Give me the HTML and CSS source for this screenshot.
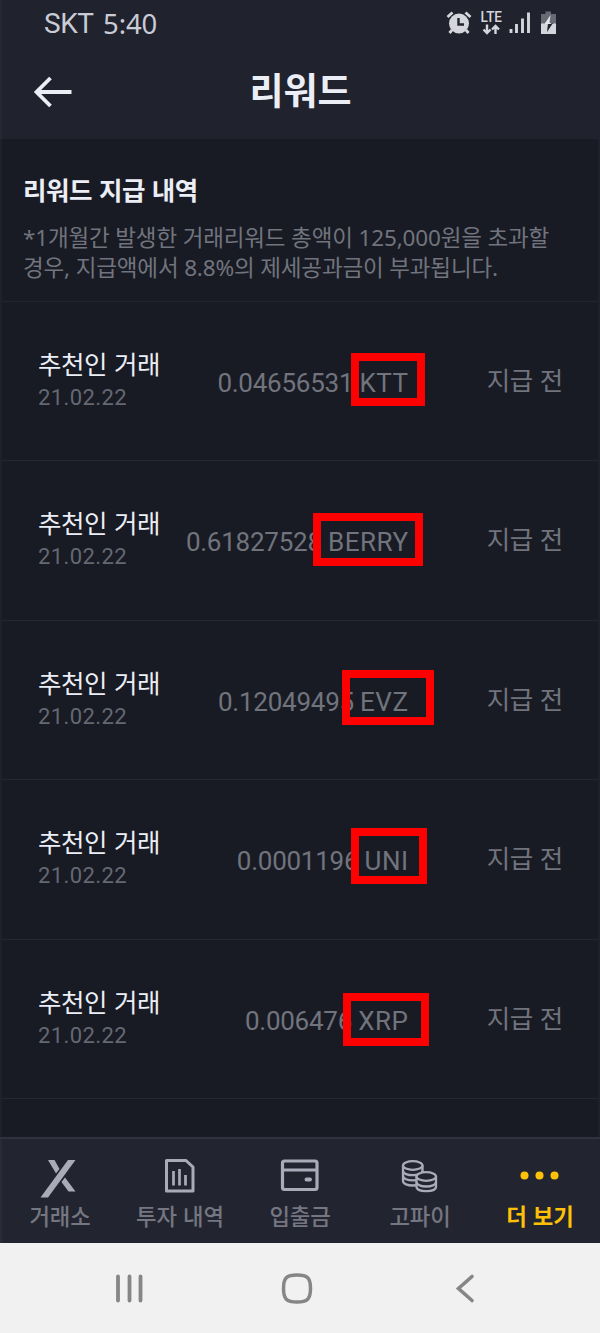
FILE: index.html
```html
<!DOCTYPE html>
<html lang="ko">
<head>
    <meta charset="UTF-8">
    <meta name="viewport" content="width=device-width, initial-scale=1.0">
    <title>리워드</title>
    <link rel="stylesheet" href="styles.css">
</head>
<body>
    <div class="app">
        <header class="top">
            <div class="status-bar">
                <span class="carrier">SKT</span><span class="clock">5:40</span>
                <svg class="status-icons" width="112" height="34" viewBox="0 -4 112 34">
                    <!-- alarm -->
                    <g stroke="#d4d6dc" fill="none">
                        <circle cx="13" cy="12.500" r="10" fill="#d4d6dc" stroke="none"/>
                        <path d="M1.500 6L6.500 1.500M24.500 6L19.500 1.500" stroke-width="2.800"/>
                        <path d="M6 19L3.500 22M20 19L22.500 22" stroke-width="2.800"/>
                        <path d="M12.500 7V13.500H18" stroke="#20222e" stroke-width="2.400"/>
                    </g>
                    <text class="lte" x="34.500" y="10.500" textLength="21.500" lengthAdjust="spacingAndGlyphs">LTE</text>
                    <g stroke="#d4d6dc" stroke-width="2.400" fill="none">
                        <path d="M41 13.500V22M37.500 18.500L41 22L44.500 18.500"/>
                        <path d="M49.500 23V14.500M46 18.500L49.500 15L53 18.500"/>
                    </g>
                    <path d="M65 22V18M70.500 22V13M76.500 22V7.500M82.500 22V1.500" stroke="#d4d6dc" stroke-width="2.900"/>
                    <!-- battery -->
                    <path d="M99.500 0.500H105V3H110V13H95V3H99.500Z" fill="#686a74"/>
                    <rect x="95" y="12.500" width="15" height="10.500" fill="#d4d6dc"/>
                    <path d="M98.500 12.500H102L101 21L107 12H103.500Z" fill="#20222e"/>
                    <path d="M104.500 4L98.500 13H106L103.500 11.500Z" fill="#e4e6ec"/>
                </svg>
            </div>
            <div class="title-bar">
                <svg class="back" width="40" height="32" viewBox="0 0 40 32" fill="none" stroke="#eceef6" stroke-width="3.800">
                    <path d="M17.500 2L3.500 16L17.500 30M4 16H38.500"/>
                </svg>
                <h1>리워드</h1>
            </div>
        </header>

        <main>
            <section class="notice">
                <h2>리워드 지급 내역</h2>
                <p>*1개월간 발생한 거래리워드 총액이 125,000원을 초과할<br>경우, 지급액에서 8.8%의 제세공과금이 부과됩니다.</p>
            </section>
            <ul class="rewards">
                <li class="reward">
                    <div class="info"><strong>추천인 거래</strong><time>21.02.22</time></div>
                    <div class="amount">0.04656531 <span>KTT</span><i class="mark ktt"></i></div>
                    <div class="state">지급 전</div>
                </li>
                <li class="reward">
                    <div class="info"><strong>추천인 거래</strong><time>21.02.22</time></div>
                    <div class="amount">0.61827528 <span>BERRY</span><i class="mark berry"></i></div>
                    <div class="state">지급 전</div>
                </li>
                <li class="reward">
                    <div class="info"><strong>추천인 거래</strong><time>21.02.22</time></div>
                    <div class="amount">0.12049495 <span>EVZ</span><i class="mark evz"></i></div>
                    <div class="state">지급 전</div>
                </li>
                <li class="reward">
                    <div class="info"><strong>추천인 거래</strong><time>21.02.22</time></div>
                    <div class="amount">0.0001196 <span>UNI</span><i class="mark uni"></i></div>
                    <div class="state">지급 전</div>
                </li>
                <li class="reward">
                    <div class="info"><strong>추천인 거래</strong><time>21.02.22</time></div>
                    <div class="amount">0.006476 <span>XRP</span><i class="mark xrp"></i></div>
                    <div class="state">지급 전</div>
                </li>
            </ul>
        </main>

        <nav class="tabs">
            <a class="tab">
                <svg width="40" height="40" viewBox="0 0 40 40" fill="#a9abb9">
                    <path d="M28 2H35.500L8 39.500H0.500Z"/>
                    <path d="M8 2H14.500L19.500 11L16 15.500ZM25 19.500L35.500 33.500H28.500L21.500 24Z"/>
                </svg>
                <span>거래소</span>
            </a>
            <a class="tab">
                <svg width="40" height="40" viewBox="0 0 40 40" fill="none" stroke="#a9abb9" stroke-width="3">
                    <path d="M6.500 2.500H26L33 9V33H6.500Z" stroke-linejoin="round"/>
                    <path d="M13.500 13V27.500M19.500 11V27.500M25.500 17V27.500" stroke-width="2.700"/>
                </svg>
                <span>투자 내역</span>
            </a>
            <a class="tab">
                <svg width="40" height="40" viewBox="0 0 40 40" fill="none" stroke="#a9abb9" stroke-width="3.200">
                    <rect x="2.500" y="3" width="34.500" height="28.500" rx="2"/>
                    <path d="M2 12H38"/>
                    <path d="M26.500 21.500H30" stroke-width="3.800" stroke-linecap="round"/>
                </svg>
                <span>입출금</span>
            </a>
            <a class="tab">
                <svg width="40" height="40" viewBox="0 0 40 40" fill="#222530" stroke="#a9abb9" stroke-width="2.300">
                    <path d="M3 7.500V23C3 29 22.500 29 22.500 23V7.500"/>
                    <path d="M3 12.700C3 18.700 22.500 18.700 22.500 12.700M3 17.800C3 24 22.500 24 22.500 17.800" fill="none"/>
                    <ellipse cx="12.750" cy="7.500" rx="9.750" ry="4.300"/>
                    <path d="M16.500 18.500V29C16.500 34.500 36 34.500 36 29V18.500"/>
                    <path d="M16.500 24C16.500 30 36 30 36 24" fill="none"/>
                    <ellipse cx="26.250" cy="18.500" rx="9.750" ry="4.300"/>
                </svg>
                <span>고파이</span>
            </a>
            <a class="tab active">
                <svg width="40" height="40" viewBox="0 0 40 40" fill="#ffc107">
                    <circle cx="4.500" cy="17.500" r="4"/><circle cx="19.500" cy="17.500" r="4"/><circle cx="34.500" cy="17.500" r="4"/>
                </svg>
                <span>더 보기</span>
            </a>
        </nav>

        <footer class="system-nav">
            <svg width="32" height="32" viewBox="0 0 32 32" fill="none" stroke="#868686" stroke-width="3.800" stroke-linecap="round"><path d="M5 4.500V28.500M16.500 4.500V28.500M27.500 4.500V28.500"/></svg>
            <svg width="34" height="34" viewBox="0 0 34 34" fill="none" stroke="#868686" stroke-width="3.500"><path d="M17 4C27.500 4 30.500 7 30.500 17.500S27.500 31 17 31S3.500 28 3.500 17.500S6.500 4 17 4Z"/></svg>
            <svg width="32" height="32" viewBox="0 0 32 32" fill="none" stroke="#868686" stroke-width="3.600" stroke-linecap="round"><path d="M23 4.500L9.500 16.500L23 28.500"/></svg>
        </footer>
    </div>
</body>
</html>
```
FILE: styles.css
```css
* { box-sizing: border-box; }
body { margin: 0; background: #181b24; font-family: "Noto Sans CJK KR", sans-serif; }
.app { width: 600px; height: 1333px; display: flex; flex-direction: column; overflow: hidden; background: #181b24; }
h1, h2, p, ul { margin: 0; padding: 0; font-weight: 400; }

.top { height: 139px; background: #20222e; border-left: 2px solid #252833; }
.status-bar { height: 46px; padding: 1px 42px 0 42px; display: flex; align-items: center; font: 28px/46px Roboto, sans-serif; color: #c9ccd6; }
.carrier { width: 59px; letter-spacing: -0.5px; }
.clock { font-family: "Noto Sans", sans-serif; font-size: 27.5px; letter-spacing: -0.1px; }
.status-icons { margin-left: auto; }
.lte { font: 500 14px Roboto, sans-serif; fill: #d4d6dc; }
.title-bar { height: 92px; padding: 0 32px 0 31px; display: grid; grid-template-columns: 40px 1fr 40px; align-items: center; }
h1 { padding-bottom: 6px; font-size: 37px; line-height: 46px; font-weight: 700; text-align: center; color: #eceef6; }

main { flex: 1; border-left: 2px solid #1e212b; border-right: 2px solid #1e212b; }
.notice { height: 163px; padding: 32px 0 0 21px; border-bottom: 1px solid #22252f; }
h2 { font-size: 25.5px; line-height: 36px; font-weight: 700; letter-spacing: -0.4px; color: #eceef6; }
.notice p { margin-top: 16px; font-family: "Noto Sans", "Noto Sans CJK KR", sans-serif; font-size: 22.5px; line-height: 30px; letter-spacing: -0.15px; color: #71747d; white-space: nowrap; }
.rewards { list-style: none; }
.reward { height: 159.4px; padding: 46px 35px 0 36px; display: grid; grid-template-columns: 122px 1fr 155px; border-bottom: 1px solid #252831; }
.info { margin-top: -2px; display: flex; flex-direction: column; white-space: nowrap; }
.info strong { font-size: 25.5px; line-height: 34px; font-weight: 400; letter-spacing: -0.4px; color: #eceef6; }
.info time { padding-top: 3px; font: 22px/30px Roboto, sans-serif; letter-spacing: 0.4px; color: #656872; }
.amount { position: relative; height: 70px; text-align: right; white-space: nowrap; letter-spacing: -0.25px; font: 26px/70px Roboto, sans-serif; color: #71747d; }
.amount span { margin-right: -0.5px; letter-spacing: 0.5px; }
.state { margin-top: -2px; text-align: right; font-size: 25.5px; line-height: 66px; letter-spacing: -0.3px; color: #71747d; }

/* highlight frames over the coin names */
.mark { position: absolute; border: 8px solid #f00; }
.ktt { right: -17px; top: 5px; width: 74px; height: 53px; }
.berry { right: -15px; top: 6px; width: 110px; height: 53px; }
.evz { right: -26px; top: 3px; width: 92px; height: 55px; }
.uni { right: -19px; top: 2px; width: 76px; height: 56px; }
.xrp { right: -21px; top: 7px; width: 86px; height: 53px; }

.tabs { height: 106px; display: grid; grid-template-columns: repeat(5, 1fr); background: #222530; border-top: 2px solid #30333e; box-shadow: inset 2px 0 #292c37; }
.tab { padding-top: 19px; display: flex; flex-direction: column; align-items: center; font-size: 22.3px; font-weight: 500; line-height: 34px; letter-spacing: -0.1px; color: #747681; white-space: nowrap; }
.active { color: #ffc107; font-weight: 700; }
.system-nav { height: 90px; padding: 0 119px 0 113px; display: flex; align-items: center; justify-content: space-between; background: #f1f1f1; }
```
